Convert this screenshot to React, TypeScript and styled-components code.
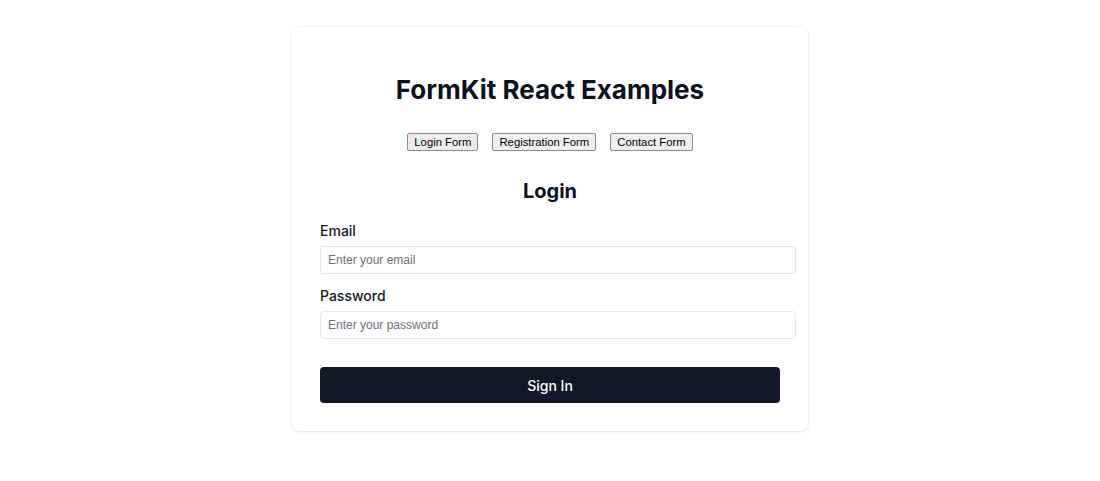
import styled, { createGlobalStyle } from "styled-components";
import { useState } from "react";

const GlobalStyle = createGlobalStyle`
  body {
    margin: 0;
    background: #ffffff;
    font-family: Inter, "Noto Sans", sans-serif;
    color: #111827;
  }
`;

const Page = styled.div`
  padding: 27px 0 40px;
  display: flex;
  justify-content: center;
`;

const Card = styled.div`
  width: 516px;
  box-sizing: border-box;
  padding: 47px 28px 28px;
  background: #ffffff;
  border-radius: 8px;
  box-shadow: 0 1px 3px rgba(15, 23, 42, 0.1), 0 0 0 1px rgba(15, 23, 42, 0.03);
`;

const Title = styled.h1`
  margin: 0;
  text-align: center;
  font-size: 26px;
  line-height: 32px;
  font-weight: 700;
  color: #0b1120;
`;

const Tabs = styled.div`
  display: flex;
  justify-content: center;
  gap: 14px;
  margin-top: 27px;
`;

const TabButton = styled.button<{ $active?: boolean }>`
  height: 18px;
  padding: 0 6px;
  font-family: "Liberation Sans", Arial, sans-serif;
  font-size: 11.3px;
  line-height: 16px;
  color: #000000;
  background: ${(p) => (p.$active ? "#ececec" : "#efefef")};
  border: 1px solid #8a8a8a;
  border-radius: 2px;
  cursor: pointer;
`;

const FormTitle = styled.h2`
  margin: 26px 0 0;
  text-align: center;
  font-size: 20px;
  line-height: 28px;
  font-weight: 700;
  color: #0b1120;
`;

const Field = styled.div<{ $first?: boolean }>`
  display: flex;
  flex-direction: column;
  gap: 6px;
  margin-top: ${(p) => (p.$first ? "17px" : "13px")};
`;

const Label = styled.label`
  font-size: 14px;
  line-height: 18px;
  font-weight: 500;
  color: #111827;
`;

const Input = styled.input`
  width: 100%;
  height: 14px;
  padding: 6px 7px;
  border: 1px solid #e5e7eb;
  border-radius: 4px;
  font-family: "Liberation Sans", Arial, sans-serif;
  font-size: 12px;
  color: #111827;
  outline: none;

  &::placeholder {
    color: #6b7280;
  }
`;

const Submit = styled.button`
  width: 100%;
  height: 36px;
  margin-top: 28px;
  border: 0;
  border-radius: 4px;
  background: #111827;
  color: #ffffff;
  font-family: Inter, "Noto Sans", sans-serif;
  font-size: 14px;
  font-weight: 500;
  cursor: pointer;
`;

const tabs = ["Login Form", "Registration Form", "Contact Form"];

function App() {
  const [active, setActive] = useState("Login Form");
  const [email, setEmail] = useState("");
  const [password, setPassword] = useState("");

  return (
    <>
      <GlobalStyle />
      <Page>
        <Card>
          <Title>FormKit React Examples</Title>

          <Tabs>
            {tabs.map((tab) => (
              <TabButton
                key={tab}
                $active={tab === active}
                onClick={() => setActive(tab)}
              >
                {tab}
              </TabButton>
            ))}
          </Tabs>

          <FormTitle>Login</FormTitle>

          <form onSubmit={(e) => e.preventDefault()}>
            <Field $first>
              <Label htmlFor="email">Email</Label>
              <Input
                id="email"
                type="email"
                placeholder="Enter your email"
                value={email}
                onChange={(e) => setEmail(e.target.value)}
              />
            </Field>

            <Field>
              <Label htmlFor="password">Password</Label>
              <Input
                id="password"
                type="password"
                placeholder="Enter your password"
                value={password}
                onChange={(e) => setPassword(e.target.value)}
              />
            </Field>

            <Submit type="submit">Sign In</Submit>
          </form>
        </Card>
      </Page>
    </>
  );
}

export default App;
